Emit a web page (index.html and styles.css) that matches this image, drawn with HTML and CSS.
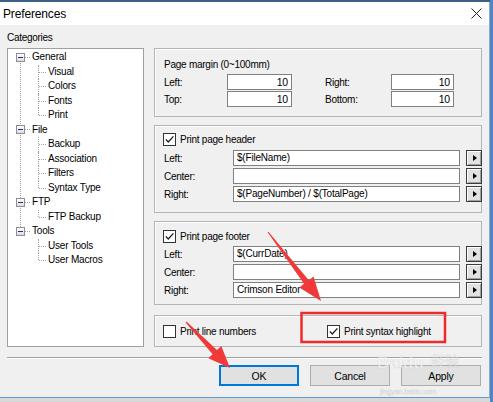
FILE: index.html
```html
<!DOCTYPE html>
<html>
<head>
<meta charset="utf-8">
<title>Preferences</title>
<link rel="stylesheet" href="styles.css">
</head>
<body>
<div class="screen">
  <div class="window">
    <div class="titlebar">
      <span class="title">Preferences</span>
      <svg class="close" width="11" height="11" viewBox="0 0 11 11"><path d="M0.5 0.5 L10.5 10.5 M10.5 0.5 L0.5 10.5" stroke="#222" stroke-width="1" fill="none"/></svg>
    </div>
    <div class="body">
      <div class="main">
        <div class="leftcol">
          <div class="cat-label">Categories</div>
          <div class="tree">
            <ul>
              <li class="tnode"><div class="trow"><span class="tbox"></span><span class="tlabel">General</span></div>
                <ul>
                  <li class="tleaf">Visual</li>
                  <li class="tleaf">Colors</li>
                  <li class="tleaf">Fonts</li>
                  <li class="tleaf">Print</li>
                </ul>
              </li>
              <li class="tnode"><div class="trow"><span class="tbox"></span><span class="tlabel">File</span></div>
                <ul>
                  <li class="tleaf">Backup</li>
                  <li class="tleaf">Association</li>
                  <li class="tleaf">Filters</li>
                  <li class="tleaf">Syntax Type</li>
                </ul>
              </li>
              <li class="tnode"><div class="trow"><span class="tbox"></span><span class="tlabel">FTP</span></div>
                <ul>
                  <li class="tleaf">FTP Backup</li>
                </ul>
              </li>
              <li class="tnode"><div class="trow"><span class="tbox"></span><span class="tlabel">Tools</span></div>
                <ul>
                  <li class="tleaf">User Tools</li>
                  <li class="tleaf">User Macros</li>
                </ul>
              </li>
            </ul>
          </div>
        </div>
        <div class="rightcol">
          <div class="panel p1">
            <div class="ptitle">Page margin (0~100mm)</div>
            <div class="margins">
              <span class="lbl">Left:</span><div class="input num">10</div><span></span>
              <span class="lbl">Right:</span><div class="input num">10</div>
              <span class="lbl">Top:</span><div class="input num">10</div><span></span>
              <span class="lbl">Bottom:</span><div class="input num">10</div>
            </div>
          </div>
          <div class="panel p2">
            <div class="check-row"><span class="cb"><svg width="11" height="11" viewBox="0 0 11 11"><path d="M1.8 5.4 L4.3 8 L9.4 2.4" stroke="#1a1a1a" stroke-width="1.3" fill="none"/></svg></span><span>Print page header</span></div>
            <div class="fields">
              <span class="lbl">Left:</span><div class="input">$(FileName)</div><span class="arrowbtn"></span>
              <span class="lbl">Center:</span><div class="input"></div><span class="arrowbtn"></span>
              <span class="lbl">Right:</span><div class="input">$(PageNumber) / $(TotalPage)</div><span class="arrowbtn"></span>
            </div>
          </div>
          <div class="panel p3">
            <div class="check-row"><span class="cb"><svg width="11" height="11" viewBox="0 0 11 11"><path d="M1.8 5.4 L4.3 8 L9.4 2.4" stroke="#1a1a1a" stroke-width="1.3" fill="none"/></svg></span><span>Print page footer</span></div>
            <div class="fields">
              <span class="lbl">Left:</span><div class="input">$(CurrDate)</div><span class="arrowbtn"></span>
              <span class="lbl">Center:</span><div class="input"></div><span class="arrowbtn"></span>
              <span class="lbl">Right:</span><div class="input">Crimson Editor</div><span class="arrowbtn"></span>
            </div>
          </div>
          <div class="panel p4">
            <div class="check-row"><span class="cb"></span><span>Print line numbers</span></div>
            <div class="check-row"><span class="cb"><svg width="11" height="11" viewBox="0 0 11 11"><path d="M1.8 5.4 L4.3 8 L9.4 2.4" stroke="#1a1a1a" stroke-width="1.3" fill="none"/></svg></span><span>Print syntax highlight</span></div>
          </div>
        </div>
      </div>
      <div class="sep"></div>
      <div class="buttons">
        <div class="btn default">OK</div>
        <div class="btn">Cancel</div>
        <div class="btn">Apply</div>
      </div>
    </div>
  </div>
  <svg class="annot" width="493" height="402" viewBox="0 0 493 402">
    <g class="watermark">
      <text x="377" y="368" font-size="17" font-family="Liberation Sans, sans-serif" font-weight="bold">Bai</text>
      <text x="403" y="369" font-size="17" font-family="Liberation Sans, sans-serif" font-weight="bold">du</text>
      <text x="431" y="366" font-size="14" font-family="Noto Sans CJK SC, sans-serif">经验</text>
      <text x="380" y="394" font-size="7" font-family="Liberation Sans, sans-serif">jingyan.baidu.com</text>
    </g>
    <rect x="301.5" y="313" width="143.5" height="29" fill="none" stroke="#ee2b2b" stroke-width="2.5"/>
    <polygon fill="#f03a3a" points="267.6,232.3 304.0,283.8 299.3,287.5 321,301 313.5,276.5 308.8,280.2 268.4,231.7"/>
    <polygon fill="#f03a3a" points="185.6,322.4 212.6,354.2 208.3,358.3 230,368 221.3,345.9 217.0,350.0 186.4,321.6"/>
  </svg>
</div>
</body>
</html>
```

FILE: styles.css
```css
* { box-sizing: border-box; }
html, body { margin: 0; padding: 0; }
body {
  font-family: "Liberation Sans", Arial, sans-serif;
  font-size: 10px;
  color: #000;
  background: #dcdcdc;
}
.screen {
  position: relative;
  width: 493px;
  height: 402px;
  overflow: hidden;
  padding-top: 2px;
  background:
    linear-gradient(to right, transparent 490px, #4f86c0 490px),
    linear-gradient(to bottom, #3b5f86 0, #3b5f86 2px, #d9d9d9 2px);
}
.window {
  width: 490px;
  height: 396px;
  border-bottom: 1px solid #5b9bd5;
  border-right: 1px solid #8fa9c6;
  display: flex;
  flex-direction: column;
}
.titlebar {
  height: 23px;
  flex: none;
  background: #fff;
  display: flex;
  align-items: center;
  justify-content: space-between;
  padding: 0 7px 0 3px;
}
.title { font-size: 12px; letter-spacing: -0.15px; }
.close { display: block; }
.body {
  flex: 1;
  background: #f0f0f0;
  padding: 7px 7px 0 7px;
}
.main { display: flex; gap: 10px; }
.leftcol { width: 137px; }
.cat-label {
  height: 12px;
  line-height: 12px;
  margin-bottom: 4px;
  letter-spacing: -0.3px;
}
.tree {
  height: 299px;
  background: #fff;
  border: 1px solid #a0a0a0;
  padding-top: 1px;
  letter-spacing: -0.2px;
}
.tree ul { list-style: none; margin: 0; padding: 0; }
.tnode { position: relative; }
.tnode:not(:last-child)::before {
  content: "";
  position: absolute;
  left: 12px;
  top: 7px;
  bottom: -7px;
  border-left: 1px dotted #a0a0a0;
}
.trow { display: flex; align-items: center; height: 14.5px; }
.tbox {
  position: relative;
  width: 9px;
  height: 9px;
  margin-left: 8px;
  border: 1px solid #8e8f8f;
  background: linear-gradient(#ffffff, #dcdcdc);
}
.tbox::before {
  content: "";
  position: absolute;
  left: 1px;
  top: 3px;
  width: 5px;
  height: 1px;
  background: #1e3287;
}
.tbox::after {
  content: "";
  position: absolute;
  left: 8px;
  top: 3px;
  width: 5px;
  border-top: 1px dotted #a0a0a0;
}
.tlabel { margin-left: 7px; line-height: 14.5px; }
.tleaf {
  position: relative;
  height: 14.5px;
  line-height: 14.5px;
  padding-left: 40px;
}
.tleaf::before {
  content: "";
  position: absolute;
  left: 30px;
  top: 0;
  height: 100%;
  border-left: 1px dotted #a0a0a0;
}
.tleaf:last-child::before { height: 7px; }
.tleaf::after {
  content: "";
  position: absolute;
  left: 31px;
  top: 7px;
  width: 7px;
  border-top: 1px dotted #a0a0a0;
}
.rightcol {
  width: 328px;
  padding-top: 16px;
  display: flex;
  flex-direction: column;
}
.panel {
  border: 1px solid #b4b4b4;
  box-shadow: inset 1px 1px 0 #fff;
  letter-spacing: -0.25px;
}
.p1 { padding: 9px 0 9px 9px; margin-bottom: 8px; }
.p2 { padding: 6px 4px 10px 9px; margin-bottom: 8px; }
.p3 { padding: 7px 4px 6px 9px; margin-bottom: 10px; }
.p4 {
  height: 32px;
  padding: 0 0 0 8px;
  display: grid;
  grid-template-columns: 164px auto;
  align-items: center;
}
.p4 .check-row { margin-left: 0; }
.ptitle { height: 14px; line-height: 14px; margin-bottom: 2px; }
.margins {
  display: grid;
  grid-template-columns: 63px 65px 33px 66px 63px;
  grid-auto-rows: 16px;
  row-gap: 1px;
  align-items: center;
}
.fields {
  display: grid;
  grid-template-columns: 63px 227px 16px;
  grid-auto-rows: 16px;
  column-gap: 6px;
  row-gap: 2px;
  align-items: center;
}
.p2 .check-row { margin-bottom: 4px; }
.p3 .check-row { margin-bottom: 3px; }
.check-row {
  display: flex;
  align-items: center;
  height: 14px;
  gap: 4px;
  margin-left: -1px;
}
.cb {
  width: 13px;
  height: 13px;
  flex: none;
  border: 1px solid #333;
  background: #fff;
  display: flex;
  align-items: center;
  justify-content: center;
}
.cb svg { display: block; }
.input {
  height: 16px;
  border: 1px solid #808080;
  background: #fff;
  padding: 0 3px;
  line-height: 14px;
  white-space: nowrap;
  overflow: hidden;
  letter-spacing: -0.2px;
}
.input.num { text-align: right; font-size: 10.5px; }
.arrowbtn {
  width: 16px;
  height: 16px;
  background: #e1e1e1;
  border: 1px solid #3c3c3c;
  box-shadow: inset 1px 1px 0 #fff, inset -1px -1px 0 #a0a0a0;
  display: flex;
  align-items: center;
  justify-content: center;
}
.arrowbtn::before {
  content: "";
  border-left: 4px solid #000;
  border-top: 3.5px solid transparent;
  border-bottom: 3.5px solid transparent;
  margin-left: 1px;
}
.sep {
  margin-top: 10px;
  height: 2px;
  border-top: 1px solid #a0a0a0;
  border-bottom: 1px solid #fff;
}
.buttons {
  margin-top: 6px;
  display: flex;
  justify-content: flex-end;
  gap: 11px;
  padding-right: 1px;
}
.btn {
  width: 80px;
  height: 21px;
  background: #e1e1e1;
  border: 1px solid #adadad;
  font-size: 10.5px;
  letter-spacing: -0.2px;
  display: flex;
  align-items: center;
  justify-content: center;
}
.btn.default {
  border-color: #0078d7;
  box-shadow: inset 0 0 0 1px #0078d7;
}
.annot {
  position: absolute;
  left: 0;
  top: 0;
  pointer-events: none;
}
.watermark text {
  fill: #ffffff;
  fill-opacity: 0.5;
  stroke: #b8b8b8;
  stroke-opacity: 0.4;
  stroke-width: 0.6;
}
```
